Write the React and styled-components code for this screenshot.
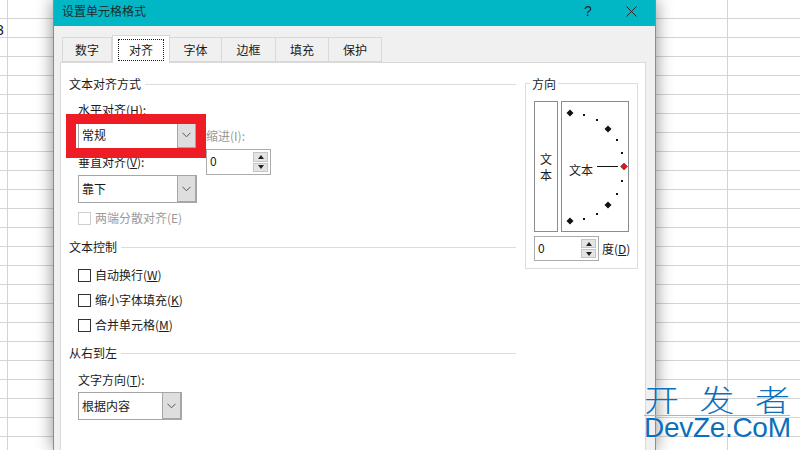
import React from "react";
import styled, { createGlobalStyle } from "styled-components";

const GlobalStyle = createGlobalStyle`
  html, body {
    margin: 0;
    padding: 0;
    background: #fff;
  }
  body {
    font-family: "Noto Sans CJK SC", "Liberation Sans", sans-serif;
    font-size: 12px;
    color: #1a1a1a;
  }
`;

const Sheet = styled.div`
  position: relative;
  width: 800px;
  height: 450px;
  overflow: hidden;
  background-color: #fff;
  background-image:
    repeating-linear-gradient(to bottom, transparent 0, transparent 18px, #d4d4d4 18px, #d4d4d4 19px),
    linear-gradient(to right, transparent 7px, #d4d4d4 7px, #d4d4d4 8px, transparent 8px),
    linear-gradient(to right, transparent 727px, #d4d4d4 727px, #d4d4d4 728px, transparent 728px);
`;

const CellText = styled.span`
  position: absolute;
  left: -4px;
  top: 21px;
  font: 14px/18px "Liberation Sans", sans-serif;
  color: #222;
`;

const Dialog = styled.div`
  position: absolute;
  left: 53px;
  top: 0;
  width: 603px;
  height: 450px;
  box-sizing: border-box;
  display: flex;
  flex-direction: column;
  background: #f0f0f0;
  border-left: 1px solid #2bb3c0;
  border-right: 1px solid #2bb3c0;
  box-shadow: 0 0 16px rgba(0, 0, 0, 0.45);
`;

const TitleBar = styled.div`
  flex: none;
  box-sizing: border-box;
  height: 26px;
  display: flex;
  align-items: flex-start;
  padding: 2px 18px 0 8px;
  background: #02b7c5;
  font-size: 12px;
  line-height: 17px;
  color: #1d2b2d;
`;

const Title = styled.span`
  flex: 1;
`;

const HelpMark = styled.span`
  width: 14px;
  margin-right: 31px;
  padding-top: 1px;
  font: 14px/17px "Liberation Sans", sans-serif;
  text-align: center;
`;

const Body = styled.div`
  flex: 1;
  min-height: 0;
  padding: 9px 9px 0 6px;
`;

const Tabs = styled.div`
  display: flex;
  align-items: flex-end;
  height: 27px;
  margin-left: 2px;
  position: relative;
  z-index: 1;
`;

const Tab = styled.div`
  box-sizing: border-box;
  width: ${(p) => p.$w}px;
  height: ${(p) => (p.$active ? 28 : 25)}px;
  padding-top: ${(p) => (p.$active ? 4 : 3)}px;
  margin-bottom: ${(p) => (p.$active ? -1 : 0)}px;
  border: 1px solid #d9d9d9;
  border-left-width: ${(p) => (p.$first || p.$active ? 1 : 0)}px;
  border-bottom-width: ${(p) => (p.$active ? 0 : 1)}px;
  background: ${(p) => (p.$active ? "#fff" : "#f0f0f0")};
  text-align: center;
  line-height: 17px;
  font-size: 12px;
`;

const FocusRing = styled.span`
  display: block;
  margin: -1px 5px 0;
  height: 22px;
  line-height: 20px;
  border: 1px dotted #222;
  box-sizing: border-box;
`;

const Panel = styled.div`
  height: 420px;
  box-sizing: border-box;
  display: flex;
  gap: 9px;
  padding: 13px 7px 0 8px;
  background: #fff;
  border: 1px solid #d9d9d9;
`;

const LeftColumn = styled.div`
  width: 447px;
  flex: none;
`;

const Legend = styled.div`
  display: flex;
  align-items: center;
  gap: 4px;
  height: 16px;
  line-height: 16px;
  margin-top: ${(p) => p.$top || 0}px;
  &::after {
    content: "";
    flex: 1;
    height: 1px;
    background: #dcdcdc;
  }
`;

const Section = styled.div`
  margin-left: 9px;
`;

const AlignGrid = styled.div`
  display: flex;
  gap: 9px;
`;

const Label = styled.div`
  height: 16px;
  line-height: 16px;
  margin-top: ${(p) => p.$top || 0}px;
  margin-bottom: ${(p) => p.$bottom || 0}px;
  color: ${(p) => (p.$disabled ? "#9a9a9a" : "inherit")};
  white-space: nowrap;
`;

const ComboBox = styled.div`
  box-sizing: border-box;
  display: flex;
  width: ${(p) => p.$w}px;
  height: 28px;
  border: 1px solid #a6a6a6;
  background: #fff;
`;

const ComboText = styled.span`
  flex: 1;
  padding-left: 3px;
  line-height: 25px;
  font-size: 12px;
`;

const ComboButton = styled.span`
  width: 17px;
  display: flex;
  align-items: center;
  justify-content: center;
  background: #dedede;
  border-left: 1px solid #a6a6a6;
  border-right: 1px solid #a6a6a6;
  border-bottom: 1px solid #a6a6a6;
`;

const SpinBox = styled.div`
  box-sizing: border-box;
  display: flex;
  width: 65px;
  height: ${(p) => p.$h || 26}px;
  border: 1px solid #ababab;
  background: #fff;
`;

const SpinValue = styled.span`
  flex: 1;
  padding-left: 3px;
  line-height: 22px;
  font-size: 12px;
`;

const SpinButtons = styled.span`
  width: 15px;
  margin: 2px 2px 2px 0;
  display: flex;
  flex-direction: column;
  gap: 1px;
`;

const SpinButton = styled.span`
  flex: 1;
  display: flex;
  align-items: center;
  justify-content: center;
  background: #e4e4e4;
  border: 1px solid #c4c4c4;
  box-sizing: border-box;
  &::after {
    content: "";
    border-left: 3.5px solid transparent;
    border-right: 3.5px solid transparent;
    ${(p) => (p.$down ? "border-top: 4px solid #222;" : "border-bottom: 4px solid #222;")}
  }
`;

const CheckRow = styled.div`
  display: flex;
  align-items: center;
  gap: 4px;
  height: 16px;
  line-height: 16px;
  margin-top: ${(p) => p.$top}px;
  color: ${(p) => (p.$disabled ? "#9a9a9a" : "inherit")};
`;

const CheckMark = styled.span`
  width: 13px;
  height: 13px;
  box-sizing: border-box;
  border: 1px solid ${(p) => (p.$disabled ? "#cfcfcf" : "#333")};
  background: #fff;
`;

const OrientBox = styled.div`
  position: relative;
  box-sizing: border-box;
  width: 114px;
  height: 186px;
  margin-top: 7px;
  padding: 17px 0 0 8px;
  border: 1px solid #dcdcdc;
`;

const OrientLegend = styled.span`
  position: absolute;
  left: 4px;
  top: -8px;
  padding: 0 2px;
  height: 16px;
  line-height: 16px;
  background: #fff;
`;

const OrientRow = styled.div`
  display: flex;
  gap: 3px;
`;

const VerticalBox = styled.div`
  box-sizing: border-box;
  width: 24px;
  height: 131px;
  display: flex;
  align-items: center;
  justify-content: center;
  border: 1px solid #8c8c8c;
  text-align: center;
  line-height: 16px;
  padding: 0 5px;
`;

const Dial = styled.svg`
  display: block;
  box-sizing: border-box;
  width: 68px;
  height: 131px;
  border: 1px solid #8c8c8c;
`;

const DegreeRow = styled.div`
  display: flex;
  align-items: center;
  gap: 3px;
  margin-top: 4px;
`;

const RedFrame = styled.div`
  position: absolute;
  left: 66px;
  top: 114px;
  width: 140px;
  height: 44px;
  box-sizing: border-box;
  border: 10px solid #ee1c25;
`;

const Watermark = styled.div`
  position: absolute;
  left: 644px;
  top: 382px;
  width: 146px;
  color: #0b6fbb;
  text-shadow: 0 0 2px rgba(255, 255, 255, 0.9);
`;

const WatermarkCn = styled.div`
  display: flex;
  justify-content: space-between;
  height: 33px;
  font-size: 35px;
  font-weight: 300;
  line-height: 33px;
  border-bottom: 1px solid #7fc4e6;
  span {
    display: block;
    transform: translateY(-1px) scaleY(0.84);
  }
`;

const WatermarkEn = styled.div`
  font: 28px/24px "Liberation Sans", sans-serif;
  letter-spacing: -0.3px;
  white-space: nowrap;
`;

const Chevron = () => (
  <svg width="9" height="6" viewBox="0 0 9 6">
    <path d="M0.5 0.8 L4.5 4.8 L8.5 0.8" fill="none" stroke="#555" strokeWidth="1" />
  </svg>
);

const Combo = ({ width, children }) => (
  <ComboBox $w={width}>
    <ComboText>{children}</ComboText>
    <ComboButton>
      <Chevron />
    </ComboButton>
  </ComboBox>
);

const Spin = ({ height }) => (
  <SpinBox $h={height}>
    <SpinValue>0</SpinValue>
    <SpinButtons>
      <SpinButton />
      <SpinButton $down />
    </SpinButtons>
  </SpinBox>
);

const tabs = [
  { name: "数字", w: 50 },
  { name: "对齐", w: 58, active: true },
  { name: "字体", w: 52 },
  { name: "边框", w: 54 },
  { name: "填充", w: 53 },
  { name: "保护", w: 53 },
];

// dial points, relative to the box at 561,101
const bigDots = [
  [8, 11],
  [46, 27],
  [46, 103],
  [8, 119],
];
const smallDots = [
  [22, 13],
  [35, 18],
  [55, 38],
  [60, 51],
  [60, 79],
  [55, 92],
  [35, 112],
  [22, 117],
];

const diamond = (x, y, r) => `${x - r},${y} ${x},${y - r} ${x + r},${y} ${x},${y + r}`;

const DialFace = () => (
  <Dial viewBox="0 0 66 129">
    {smallDots.map(([x, y]) => (
      <rect key={`${x}-${y}`} x={x - 1} y={y - 1} width="2" height="2" fill="#111" />
    ))}
    {bigDots.map(([x, y]) => (
      <polygon key={`${x}-${y}`} points={diamond(x, y, 3.5)} fill="#111" />
    ))}
    <line x1="35" y1="64.5" x2="56" y2="64.5" stroke="#111" strokeWidth="1" />
    <polygon points={diamond(62, 64.5, 3.5)} fill="#e0141c" stroke="#333" strokeWidth="0.5" />
    <text x="7" y="73" fontSize="12" fill="#1a1a1a">
      文本
    </text>
  </Dial>
);

export default function App() {
  return (
    <Sheet>
      <GlobalStyle />
      <CellText>3</CellText>
      <Dialog>
        <TitleBar>
          <Title>设置单元格格式</Title>
          <HelpMark>?</HelpMark>
          <svg width="11" height="11" viewBox="0 0 11 11" style={{ marginTop: 4 }}>
            <path d="M0.5 0.5 L10.5 10.5 M10.5 0.5 L0.5 10.5" stroke="#1d2b2d" strokeWidth="1" />
          </svg>
        </TitleBar>
        <Body>
          <Tabs>
            {tabs.map((t, i) => (
              <Tab key={t.name} $w={t.w} $active={t.active} $first={i === 0}>
                {t.active ? <FocusRing>{t.name}</FocusRing> : t.name}
              </Tab>
            ))}
          </Tabs>
          <Panel>
            <LeftColumn>
              <Legend>文本对齐方式</Legend>
              <Section>
                <AlignGrid>
                  <div>
                    <Label $top={10} $bottom={3}>
                      水平对齐(<u>H</u>):
                    </Label>
                    <Combo width={119}>常规</Combo>
                    <Label $top={5} $bottom={5}>
                      垂直对齐(<u>V</u>):
                    </Label>
                    <Combo width={119}>靠下</Combo>
                  </div>
                  <div>
                    <Label $top={36} $bottom={5} $disabled>
                      缩进(I):
                    </Label>
                    <Spin />
                  </div>
                </AlignGrid>
                <CheckRow $top={7} $disabled>
                  <CheckMark $disabled />
                  两端分散对齐(E)
                </CheckRow>
              </Section>
              <Legend $top={13}>文本控制</Legend>
              <Section>
                <CheckRow $top={12}>
                  <CheckMark />
                  <span>
                    自动换行(<u>W</u>)
                  </span>
                </CheckRow>
                <CheckRow $top={9}>
                  <CheckMark />
                  <span>
                    缩小字体填充(<u>K</u>)
                  </span>
                </CheckRow>
                <CheckRow $top={9}>
                  <CheckMark />
                  <span>
                    合并单元格(<u>M</u>)
                  </span>
                </CheckRow>
              </Section>
              <Legend $top={12}>从右到左</Legend>
              <Section>
                <Label $top={11} $bottom={4}>
                  文字方向(<u>T</u>):
                </Label>
                <Combo width={104}>根据内容</Combo>
              </Section>
            </LeftColumn>
            <OrientBox>
              <OrientLegend>方向</OrientLegend>
              <OrientRow>
                <VerticalBox>文本</VerticalBox>
                <DialFace />
              </OrientRow>
              <DegreeRow>
                <Spin height={25} />
                <span>
                  度(<u>D</u>)
                </span>
              </DegreeRow>
            </OrientBox>
          </Panel>
        </Body>
      </Dialog>
      <RedFrame />
      <Watermark>
        <WatermarkCn>
          <span>开</span>
          <span>发</span>
          <span>者</span>
        </WatermarkCn>
        <WatermarkEn>DevZe.CoM</WatermarkEn>
      </Watermark>
    </Sheet>
  );
}
